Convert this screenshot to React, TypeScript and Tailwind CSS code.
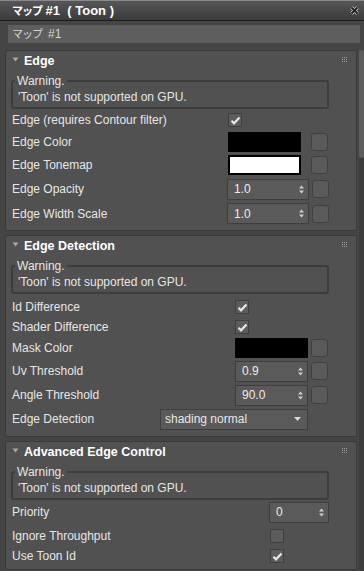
import React from 'react';

const FONT = { fontFamily: '"Liberation Sans", "Noto Sans CJK JP", sans-serif' };

function Check() {
  return (
    <svg width="11" height="9" viewBox="0 0 11 9">
      <path d="M1.5 4.8 L4 7.3 L9.5 1.5" stroke="#e6e6e6" strokeWidth="2.2" fill="none" />
    </svg>
  );
}

function Checkbox({ checked }: { checked?: boolean }) {
  return (
    <div className="w-[14px] h-[14px] bg-[#5c5c5c] border border-[#3f3f3f] flex items-center justify-center">
      {checked && <Check />}
    </div>
  );
}

function Swatch({ white, w }: { white?: boolean; w: string }) {
  return (
    <div
      className={`${w} h-[20px] ${white ? 'bg-white border-2 border-black' : 'bg-black'}`}
    />
  );
}

function SpinArrows() {
  return (
    <svg width="5" height="9" viewBox="0 0 5 9">
      <path d="M0 3.5 L2.5 0.5 L5 3.5 Z" fill="#cfcfcf" />
      <path d="M0 5.5 L2.5 8.5 L5 5.5 Z" fill="#cfcfcf" />
    </svg>
  );
}

function Spinner({ value, w }: { value: string; w: string }) {
  return (
    <div className={`${w} h-[21px] bg-[#5a5a5a] border border-[#3e3e3e] flex items-center justify-between pl-[6px] pr-[4px]`}>
      <span className="text-[#ececec] text-[12px]">{value}</span>
      <SpinArrows />
    </div>
  );
}

function MapButton() {
  return <div className="w-[17px] h-[18px] bg-[#5a5a5a] border border-[#404040] rounded-[3px] ml-[3px]" />;
}

// 3x3 dotted grip in rollout header
function Grip() {
  return (
    <svg width="6" height="6" viewBox="0 0 6 6" shapeRendering="crispEdges">
      {[0, 2, 4].map((x) =>
        [0, 2, 4].map((y) => <rect key={`${x}-${y}`} x={x} y={y} width="1" height="1" fill="#a0a0a0" />)
      )}
    </svg>
  );
}

function Section({ title, className, children }: { title: string; className: string; children: React.ReactNode }) {
  return (
    <div className={`bg-[#515151] border border-[#3a3a3a] rounded-[2px] flex flex-col ${className}`}>
      <div className="h-[20px] flex items-center pl-[6px] pr-[8px]">
        <svg width="7" height="5" viewBox="0 0 7 5" className="mr-[5px] mt-[-3px]">
          <path d="M0.5 0.5 L6.5 0.5 L3.5 4.5 Z" fill="#a8a8a8" />
        </svg>
        <span className="text-white font-bold text-[12.5px]">{title}</span>
        <div className="ml-auto mt-[-3px] flex">
          <Grip />
        </div>
      </div>
      <div className="relative mt-[9px] ml-[5px] w-[318px] h-[29px] border-2 border-[#3d3d3d] rounded-[3px]">
        <span className="absolute left-[2px] top-[-8px] bg-[#515151] px-[2px] text-[#e6e6e6] text-[12px] leading-[14px]">
          Warning.
        </span>
        <div className="pl-[5px] pt-[8px] text-[#e6e6e6] text-[12px] leading-[14px]">'Toon' is not supported on GPU.</div>
      </div>
      {children}
    </div>
  );
}

function Row({ label, lw, h, children }: { label: string; lw: string; h: string; children?: React.ReactNode }) {
  return (
    <div className={`flex items-center pl-[6px] ${h}`}>
      <div className={`${lw} shrink-0 text-[#e6e6e6] text-[12px]`}>{label}</div>
      {children}
    </div>
  );
}

export default function App() {
  return (
    <div className="w-[364px] h-[571px] bg-[#454545] flex flex-col overflow-hidden" style={FONT}>
      {/* title bar */}
      <div className="h-[21px] shrink-0 bg-gradient-to-b from-[#575757] to-[#3b3b3b] border-t border-[#8a8a8a] border-b border-b-[#1c1c1c] flex items-center pl-[12px] pr-[5px]">
        <span className="text-white font-bold text-[13px] whitespace-pre">
          <span className="text-[11px] tracking-[-1px]">マップ</span> #1  ( Toon )
        </span>
        <svg width="9" height="9" viewBox="0 0 9 9" className="ml-auto">
          <path d="M1.5 1.5 L7.5 7.5 M7.5 1.5 L1.5 7.5" stroke="#d0d0d0" strokeWidth="3.4" />
          <path d="M1.5 1.5 L7.5 7.5 M7.5 1.5 L1.5 7.5" stroke="#222" strokeWidth="2" />
        </svg>
      </div>
      {/* name field */}
      <div className="pt-[4px] pl-[8px] pr-[4px] shrink-0">
        <div className="h-[18px] bg-[#5e5e5e] flex items-center pl-[4px] text-[#d4d4d4] text-[12px]">
          <span className="text-[11px] tracking-[-1px] mr-[6px]">マップ</span>#1
        </div>
      </div>
      <div className="flex flex-1 mt-[7px]">
        <div className="w-[352px] ml-[5px] flex flex-col gap-[4px]">
          <Section title="Edge" className="h-[181px]">
            <Row label="Edge (requires Contour filter)" lw="w-[216px]" h="h-[20px] mt-[1px]">
              <Checkbox checked />
            </Row>
            <Row label="Edge Color" lw="w-[216px]" h="h-[23px]">
              <Swatch w="w-[73px]" />
              <div className="ml-[7px]"><MapButton /></div>
            </Row>
            <Row label="Edge Tonemap" lw="w-[216px]" h="h-[24px]">
              <Swatch white w="w-[73px]" />
              <div className="ml-[7px]"><MapButton /></div>
            </Row>
            <Row label="Edge Opacity" lw="w-[215px]" h="h-[24px]">
              <Spinner value="1.0" w="w-[82px]" />
              <MapButton />
            </Row>
            <Row label="Edge Width Scale" lw="w-[215px]" h="h-[25px]">
              <Spinner value="1.0" w="w-[82px]" />
              <MapButton />
            </Row>
          </Section>
          <Section title="Edge Detection" className="h-[202px]">
            <Row label="Id Difference" lw="w-[223px]" h="h-[20px] mt-[3px]">
              <Checkbox checked />
            </Row>
            <Row label="Shader Difference" lw="w-[223px]" h="h-[20px]">
              <Checkbox checked />
            </Row>
            <Row label="Mask Color" lw="w-[223px]" h="h-[22px]">
              <Swatch w="w-[73px]" />
              <MapButton />
            </Row>
            <Row label="Uv Threshold" lw="w-[223px]" h="h-[24px]">
              <Spinner value="0.9" w="w-[73px]" />
              <MapButton />
            </Row>
            <Row label="Angle Threshold" lw="w-[223px]" h="h-[24px]">
              <Spinner value="90.0" w="w-[73px]" />
              <MapButton />
            </Row>
            <Row label="Edge Detection" lw="w-[148px]" h="h-[24px]">
              <div className="w-[148px] h-[21px] bg-[#5a5a5a] border border-[#3e3e3e] flex items-center justify-between pl-[4px] pr-[6px]">
                <span className="text-[#e6e6e6] text-[12px]">shading normal</span>
                <svg width="7" height="4" viewBox="0 0 7 4">
                  <path d="M0 0 L7 0 L3.5 4 Z" fill="#d8d8d8" />
                </svg>
              </div>
            </Row>
          </Section>
          <Section title="Advanced Edge Control" className="h-[129px]">
            <Row label="Priority" lw="w-[257px]" h="h-[24px]">
              <Spinner value="0" w="w-[60px]" />
            </Row>
            <Row label="Ignore Throughput" lw="w-[258px]" h="h-[24px]">
              <Checkbox />
            </Row>
            <Row label="Use Toon Id" lw="w-[258px]" h="h-[16px]">
              <Checkbox checked />
            </Row>
          </Section>
        </div>
        <div className="ml-[2px] w-[5px] flex flex-col">
          <div className="h-[108px] bg-[#5e5e5e] rounded-[2px]" />
          <div className="flex-1 bg-[#3c3c3c]" />
        </div>
      </div>
    </div>
  );
}
